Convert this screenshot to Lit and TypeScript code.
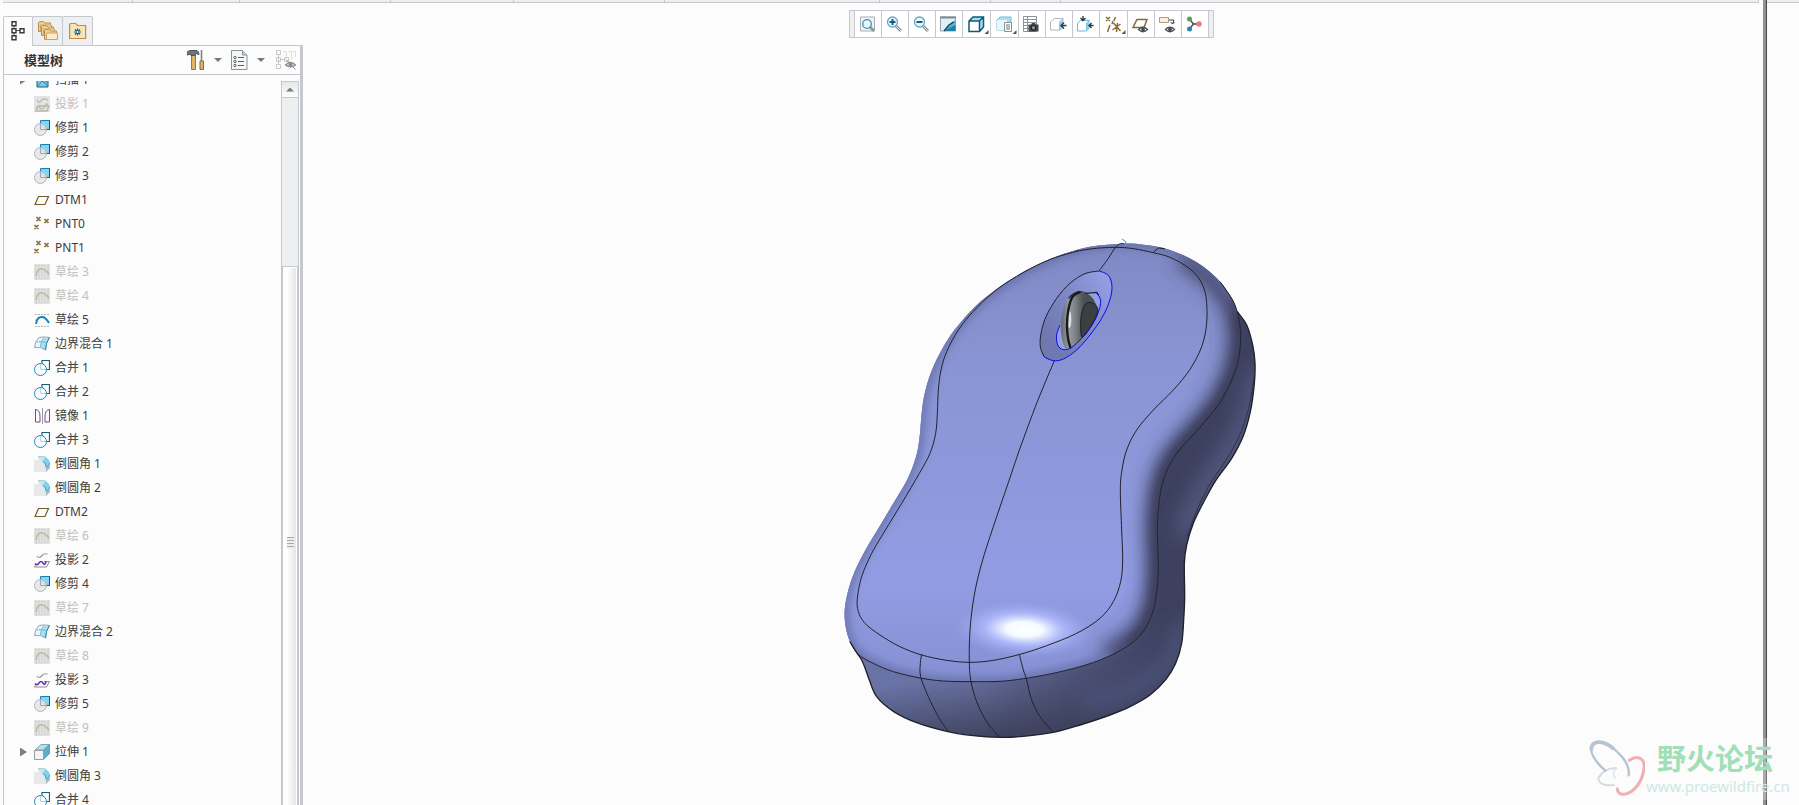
import { LitElement, html, svg, css } from "lit";
import { customElement, state } from "lit/decorators.js";

type Pt = [number, number];

/** Catmull-Rom spline through the points, as an SVG path. */
function curve(points: Pt[], closed = false): string {
  const n = points.length;
  const at = (i: number): Pt =>
    closed ? points[(i + n) % n] : points[Math.max(0, Math.min(n - 1, i))];
  let d = `M${points[0][0]} ${points[0][1]}`;
  const last = closed ? n : n - 1;
  for (let i = 0; i < last; i++) {
    const [a, b, c, e] = [at(i - 1), at(i), at(i + 1), at(i + 2)];
    const r = (v: number) => Math.round(v * 10) / 10;
    d += `C${r(b[0] + (c[0] - a[0]) / 6)} ${r(b[1] + (c[1] - a[1]) / 6)} ${r(c[0] - (e[0] - b[0]) / 6)} ${r(c[1] - (e[1] - b[1]) / 6)} ${c[0]} ${c[1]}`;
  }
  return closed ? d + "Z" : d;
}

const RIGHT_SIDE: Pt[] = [
  [1222, 245], [1250, 285], [1268, 345], [1275, 400], [1273, 460], [1262, 540], [1240, 617],
  [1205, 685], [1157, 752], [1120, 818], [1090, 880], [1070, 945], [1063, 1000], [1064, 1100],
  [1061, 1170], [1055, 1240], [1037, 1300], [1008, 1348], [960, 1395], [900, 1430], [840, 1455],
  [750, 1485], [670, 1507], [580, 1519], [510, 1522], [430, 1517], [350, 1504], [260, 1478],
  [190, 1444], [140, 1400], [118, 1350], [108, 1322], [95, 1290], [80, 1268], [60, 1235],
];
const LEFT_SIDE: Pt[] = [
  [47, 1190], [44, 1140], [55, 1080], [75, 1022], [108, 957], [148, 890], [190, 820], [230, 752],
  [250, 705], [263, 660], [270, 610], [275, 550], [283, 495], [302, 430], [332, 365], [375, 298],
  [435, 230], [500, 177], [560, 138], [620, 105], [700, 72], [780, 50], [880, 41],
];
const TOP_RIGHT: Pt[] = [
  [940, 44], [1000, 54], [1060, 76], [1120, 110], [1170, 155], [1205, 205],
];
const LOWER_EDGE: Pt[] = [
  [1222, 245], [1232, 310], [1226, 385], [1205, 450], [1168, 520], [1110, 592], [1050, 658],
  [1015, 712], [995, 770], [986, 830], [982, 900], [985, 1000], [982, 1070], [970, 1140],
  [943, 1200], [900, 1243], [830, 1282], [750, 1310], [660, 1332], [580, 1346], [510, 1354],
  [420, 1355], [340, 1353], [270, 1344], [190, 1325], [130, 1300], [85, 1273], [60, 1235],
];
const UPPER_EDGE: Pt[] = [
  [855, 52], [780, 57], [710, 72], [640, 97], [560, 139], [490, 187], [430, 244], [385, 300],
  [350, 365], [333, 420], [325, 480], [322, 550], [317, 610], [300, 670], [268, 730], [215, 820],
  [165, 902], [125, 970], [95, 1040], [82, 1105], [85, 1145], [105, 1180], [150, 1215],
  [210, 1250], [275, 1275], [350, 1291], [420, 1297], [490, 1291], [570, 1273], [650, 1247],
  [740, 1210], [810, 1165], [850, 1115], [872, 1055], [878, 990], [875, 900], [871, 780],
  [876, 720], [890, 660], [920, 600], [970, 540], [1030, 480], [1080, 418], [1115, 350],
  [1130, 280], [1128, 200], [1110, 150], [1075, 113], [1020, 82], [970, 68], [910, 56],
];
const RECESS: Pt[] = [
  [808, 123], [835, 136], [846, 170], [838, 215], [815, 265], [780, 315], [740, 360], [700, 387],
  [670, 392], [642, 380], [631, 350], [633, 310], [648, 260], [680, 205], [720, 160], [765, 131],
];
const OPENING: Pt[] = [
  [770, 190], [800, 188], [812, 212], [805, 247], [785, 287], [755, 325], [725, 352], [700, 359],
  [683, 345], [680, 315], [690, 285], [720, 230],
];
const WHEEL: Pt[] = [
  [747, 184], [718, 200], [699, 240], [692, 290], [698, 335], [710, 357], [730, 348], [757, 323],
  [785, 285], [803, 245], [790, 208], [768, 188],
];
const HUB: Pt[] = [
  [780, 217], [797, 226], [803, 245], [785, 285], [758, 321], [752, 290], [755, 250], [765, 225],
];

const OUTLINE = curve([...RIGHT_SIDE, ...LEFT_SIDE, ...TOP_RIGHT], true);
const SHELL = curve([...LOWER_EDGE, ...LEFT_SIDE, ...TOP_RIGHT], true);

const mouseModel = svg`
  <defs>
    <clipPath id="outline"><path d=${OUTLINE} /></clipPath>
    <clipPath id="shell"><path d=${SHELL} /></clipPath>
    <clipPath id="wheel"><path d=${curve(WHEEL, true)} /></clipPath>
    <filter id="soft" x="-30%" y="-30%" width="160%" height="160%"><feGaussianBlur stdDeviation="28" /></filter>
    <filter id="softer" x="-50%" y="-50%" width="200%" height="200%"><feGaussianBlur stdDeviation="14" /></filter>
    <linearGradient id="top" x1="0" y1="0" x2="0" y2="1">
      <stop offset="0" stop-color="#8089c4" /><stop offset=".3" stop-color="#8a95d5" />
      <stop offset=".78" stop-color="#919ce3" /><stop offset="1" stop-color="#8690d2" />
    </linearGradient>
    <linearGradient id="front" gradientUnits="userSpaceOnUse" x1="400" y1="1330" x2="430" y2="1525">
      <stop offset="0" stop-color="#6973a6" /><stop offset="1" stop-color="#40445f" />
    </linearGradient>
    <linearGradient id="flank" gradientUnits="userSpaceOnUse" x1="450" y1="0" x2="1000" y2="0">
      <stop offset="0" stop-color="#3d405e" stop-opacity="0" /><stop offset="1" stop-color="#3d405e" />
    </linearGradient>
    <linearGradient id="tread" gradientUnits="userSpaceOnUse" x1="692" y1="0" x2="765" y2="0">
      <stop offset="0" stop-color="#656b70" /><stop offset=".35" stop-color="#949ba1" />
      <stop offset=".6" stop-color="#7d8488" /><stop offset="1" stop-color="#43484b" />
    </linearGradient>
    <linearGradient id="dish" gradientUnits="userSpaceOnUse" x1="640" y1="300" x2="840" y2="170">
      <stop offset="0" stop-color="#6f78af" /><stop offset=".5" stop-color="#7e88c6" /><stop offset="1" stop-color="#929de4" />
    </linearGradient>
    <radialGradient id="shine">
      <stop offset="0" stop-color="#fff" /><stop offset=".26" stop-color="#f4fbff" />
      <stop offset=".55" stop-color="#b6c0ff" stop-opacity=".8" /><stop offset="1" stop-color="#99a4f0" stop-opacity="0" />
    </radialGradient>
  </defs>
  <path d=${OUTLINE} fill="url(#front)" />
  <g clip-path="url(#outline)">
    <rect x="450" y="200" width="900" height="1340" fill="url(#flank)" />
    <path d=${curve([[1290, 420], [1262, 540], [1200, 665], [1110, 800], [1060, 920]])} fill="none" stroke="#525981" stroke-width="60" filter="url(#soft)" />
    <path d=${curve([[1060, 1180], [1020, 1290], [920, 1370], [760, 1420]])} fill="none" stroke="#4c5279" stroke-width="56" filter="url(#soft)" />
  </g>
  <path d=${SHELL} fill="url(#top)" />
  <g clip-path="url(#shell)">
    <path d=${curve([[1060, 77], [1120, 110], [1170, 155], [1205, 205], ...LOWER_EDGE.slice(0, 17)])} fill="none" stroke="#3a3e5b" stroke-width="72" filter="url(#soft)" />
    <path d=${curve(LOWER_EDGE.slice(0, 16))} fill="none" stroke="#3a3e5b" stroke-width="34" filter="url(#softer)" />
    <path d=${curve([...LOWER_EDGE.slice(16), ...LEFT_SIDE, ...TOP_RIGHT])} fill="none" stroke="#626ca4" stroke-width="22" filter="url(#softer)" />
  </g>
  <ellipse cx="583" cy="1198" rx="210" ry="86" fill="url(#shine)" transform="rotate(3 583 1198)" />
  <path d=${curve(RECESS, true)} fill="url(#dish)" />
  <path d=${curve(OPENING, true)} fill="#949fe7" />
  <path d=${curve(WHEEL, true)} fill="url(#tread)" />
  <g clip-path="url(#wheel)">
    <path d="M745 180Q790 195 806 245" fill="none" stroke="#50565a" stroke-width="20" filter="url(#softer)" />
    <ellipse cx="718" cy="268" rx="6" ry="26" fill="#eef1f4" opacity=".8" />
  </g>
  <path d=${curve(HUB, true)} fill="#3c3f42" stroke="#1f2022" stroke-width="3" />
  <path d=${curve([[752, 185], [728, 200], [715, 240], [711, 290], [715, 330], [722, 355]])} fill="none" stroke="#17181a" stroke-width="7" />
  <g fill="none" stroke="#20222b" stroke-width="3">
    <path d=${curve(RIGHT_SIDE)} stroke-width="4" />
    <path d=${curve([[1273, 440], [1256, 535], [1226, 622], [1185, 695], [1135, 770], [1095, 855], [1072, 920]])} stroke-width="2" />
    <path d=${curve(LOWER_EDGE)} />
    <path d=${curve([[1170, 155], [1205, 205], [1222, 245]])} />
    <path d=${curve(UPPER_EDGE, true)} />
    <path d="M738 66L743 60M970 67L985 54L1004 56" />
    <path d=${curve([[882, 41], [868, 42], [855, 54], [835, 85], [808, 122]])} />
    <path d=${curve([[673, 392], [622, 515], [570, 655], [536, 755], [490, 890], [455, 1000], [432, 1100], [420, 1200], [418, 1297], [423, 1354], [440, 1415], [470, 1475], [508, 1521]])} />
    <path d=${curve([[275, 1273], [271, 1300], [272, 1340], [295, 1400], [325, 1460], [355, 1505]])} />
    <path d=${curve([[568, 1273], [580, 1320], [590, 1350], [605, 1410], [630, 1460], [670, 1507]])} />
    <path d=${curve([...RECESS.slice(9), RECESS[0]])} />
    <path d="M766 190L800 187L806 196M747 184Q728 190 716 205" stroke-width="4" />
  </g>
  <g fill="none" stroke="#0a0ae6" stroke-width="3">
    <path d=${curve(RECESS.slice(0, 10))} />
    <path d=${curve(OPENING.slice(1, 11))} />
  </g>
  <path d="M876 27L886 34L888 42" fill="none" stroke="#21a3bd" stroke-width="3" />
`;

const grayDots = svg`<path d="M1.500 2h13M1.500 5h13M1.500 8h13M1.500 11h13M1.500 14h13" stroke="#b2b2ae" stroke-dasharray="1 2" fill="none" />`;

const treeIcons: Record<string, unknown> = {
  sweep: svg`<path d="M3 5h11v10H3z" fill="#7dcbea" stroke="#17617e" /><path d="M3 15l5-6 3 2 3 4M3 8l4-2 7 5" stroke="#2a87aa" fill="none" />`,
  projectOff: svg`<rect width="16" height="16" fill="#e3e3e3" /><path d="M3 4q2 4 4 1t4-2 3 1M2 15l2-5h11l-2 5zM2 13q2-4 4-1t5-2 2 1" fill="none" stroke="#b9b9a8" stroke-width="1.300" />`,
  project: svg`<path d="M3 4q2 3 4.500 0t6-2" fill="none" stroke="#9a9a9a" stroke-width="1.200" /><path d="M10 9.500h5.500l-3 5.500H.5l1-2" fill="none" stroke="#8c8c8c" /><path d="M1 11.500q2 2.500 4-.5t4 0 3-1.500" fill="none" stroke="#6d2fb0" stroke-width="1.600" />`,
  trim: svg`<path d="M6.500.5h9v9h-3L6.500 5z" fill="#85d4f7" stroke="#1584ab" /><path d="M15.500.5v9h-4" fill="none" stroke="#125b78" /><circle cx="6.500" cy="9.500" r="6" fill="#e4e4e4" fill-opacity=".85" stroke="#b2b4b6" /><path d="M6.500 3.500v6h6" fill="none" stroke="#9aabb3" />`,
  plane: svg`<path d="M4.500 4.500h10l-3.500 8H1z" fill="none" stroke="#735c2c" stroke-width="1.200" />`,
  point: svg`<path d="M2.500 1l4 4m0-4l-4 4M10.500 3l4 4m0-4l-4 4M.5 9l4 4m0-4l-4 4" stroke="#876b35" stroke-width="1.600" />`,
  sketchOff: svg`<rect width="16" height="16" fill="#e1e1e1" />${grayDots}<path d="M2 12q1-8 7-7 3 1 6 5" fill="none" stroke="#bdbca5" stroke-width="1.700" />`,
  sketch: svg`<path d="M1.500 2.500h13M1.500 14.500h13M1.500 8h3M12 8h3" stroke="#68717a" stroke-dasharray="1 2" /><path d="M2 12q1-8 7-7 3 1 6 6" fill="none" stroke="#1785b5" stroke-width="2" />`,
  blend: svg`<path d="M5 1.500Q10 .3 15.500 1.500 11 7 11.500 14 7 10.500.5 11.500 1 5 5 1.500z" fill="#e6f6fd" stroke="#9aa5aa" /><path d="M10.500 2Q6.500 6 6.500 11l4.500 2.500q0-6.500 4-11.500z" fill="#8fd6f3" opacity=".75" /><path d="M2.500 6Q8 4.500 13 7M10 1.500Q6 6 6.500 11" stroke="#7fb9ce" fill="none" /><path d="M15.500 1.500Q11.500 7 11.500 14" stroke="#2583a5" fill="none" />`,
  merge: svg`<path d="M8 4V.5h7.500v9H12" fill="none" stroke="#145f7c" stroke-width="1.200" /><circle cx="6.500" cy="9.500" r="6" fill="#fcfeff" stroke="#2488ab" /><path d="M6.500 4v5.500H12" stroke="#b4d2de" fill="none" />`,
  mirror: svg`<path d="M8.500 0v16" stroke="#999" /><path d="M1 1.500q5 0 5 7v5.500H1.500V1.500M16 1.500q-5 0-5 7v5.500h4.500V1.500" fill="none" stroke="#7d459b" />`,
  round: svg`<path d="M0 4h5q6 1 7 8v4H0z" fill="#e8e8e8" /><path d="M4 1q5-2 9 1 3 3 3 5l-4 5Q11 5 5 4z" fill="#b8e8fa" /><path d="M9 5.500q3 2 3.500 6.500L16 7.500Q15 3 12 1.500z" fill="#7fd0f0" /><path d="M4 .5q5-1 8 1l-3 4" fill="none" stroke="#b5c3c9" /><path d="M9 5.500q3 2 3.500 6.500L16 7" fill="none" stroke="#3e9bbd" /><path d="M12 12l4-4v4l-4 4z" fill="#a9b9c0" />`,
  extrude: svg`<path d="M1 6l6-5.500h8.500l-6 5.500z" fill="#b8dfee" stroke="#75a6ba" /><path d="M9.500 6l6-5.500v9l-6 6z" fill="#60aecb" stroke="#5b9fb9" /><path d="M.5 6.500h9v9h-9z" fill="#f4f4f4" stroke="#9b9b9b" />`,
};

type Row = { icon: string; name: string; off?: boolean; folded?: boolean };
const ROWS: Row[] = [
  { icon: "sweep", name: "扫描 1", folded: true },
  { icon: "projectOff", name: "投影 1", off: true },
  { icon: "trim", name: "修剪 1" },
  { icon: "trim", name: "修剪 2" },
  { icon: "trim", name: "修剪 3" },
  { icon: "plane", name: "DTM1" },
  { icon: "point", name: "PNT0" },
  { icon: "point", name: "PNT1" },
  { icon: "sketchOff", name: "草绘 3", off: true },
  { icon: "sketchOff", name: "草绘 4", off: true },
  { icon: "sketch", name: "草绘 5" },
  { icon: "blend", name: "边界混合 1" },
  { icon: "merge", name: "合并 1" },
  { icon: "merge", name: "合并 2" },
  { icon: "mirror", name: "镜像 1" },
  { icon: "merge", name: "合并 3" },
  { icon: "round", name: "倒圆角 1" },
  { icon: "round", name: "倒圆角 2" },
  { icon: "plane", name: "DTM2" },
  { icon: "sketchOff", name: "草绘 6", off: true },
  { icon: "project", name: "投影 2" },
  { icon: "trim", name: "修剪 4" },
  { icon: "sketchOff", name: "草绘 7", off: true },
  { icon: "blend", name: "边界混合 2" },
  { icon: "sketchOff", name: "草绘 8", off: true },
  { icon: "project", name: "投影 3" },
  { icon: "trim", name: "修剪 5" },
  { icon: "sketchOff", name: "草绘 9", off: true },
  { icon: "extrude", name: "拉伸 1", folded: true },
  { icon: "round", name: "倒圆角 3" },
  { icon: "merge", name: "合并 4" },
];

const eye = svg`<path d="M6.500 13.500Q11 9 15.500 13.500 11 18 6.500 13.500z" fill="#fff" stroke="#4a4f54" stroke-width="1.300" /><circle cx="11" cy="13.500" r="2" fill="#4a4f54" />`;
const lens = (sign: unknown) => svg`<path d="M10 10l5 5" stroke="#8f9499" stroke-width="3" /><path d="M10 10l5 5" stroke="#dde0e2" /><circle cx="6.500" cy="6" r="5" fill="#edf8fd" stroke="#64a7c2" stroke-width="1.300" />${sign}`;

const TOOLS: { label: string; menu?: boolean; art: unknown }[] = [
  { label: "重新调整", art: svg`<path d="M1.500 15V1h14v14z" fill="#f2f3f4" stroke="#a9adb0" /><path d="M11 11l4 4" stroke="#8f9499" stroke-width="2.500" /><circle cx="8" cy="8" r="4.300" fill="#eaf7fc" stroke="#3f8fb0" stroke-width="1.300" />` },
  { label: "放大", art: lens(svg`<path d="M3.500 6h6M6.500 3v6" stroke="#125f83" stroke-width="2" />`) },
  { label: "缩小", art: lens(svg`<path d="M3.500 6h6" stroke="#125f83" stroke-width="2" />`) },
  { label: "重画", art: svg`<path d="M.5 1h15v14H.5z" fill="#dff1f8" stroke="#98a4aa" /><path d="M15.500 4v11H4q4-8 11.500-11z" fill="#5fb0cf" /><path d="M15.500 9v6H4z" fill="#1f7ea5" /><path d="M4 15l5-6 5-3" stroke="#0e4b66" stroke-width="1.400" fill="none" /><path d="M0 1.500h16" stroke="#7c8a91" stroke-width="2" />` },
  { label: "显示样式", menu: true, art: svg`<path d="M1 5l4-4h10.500v10l-4 4.500H1z" fill="#a7ddf3" /><path d="M1 5h10.500v10.500H1z" fill="#fff" /><path d="M1 5l4-4h10.500v10l-4 4.500H1zM1 5h10.500v10.500M11.500 5l4-4" fill="none" stroke="#0f5a7c" stroke-width="1.500" />` },
  { label: "已保存方向", menu: true, art: svg`<path d="M1 4l3-3h11v9l-4 4H1z" fill="#a9e0f5" stroke="#7bb9d1" /><path d="M1 4h10v10H1z" fill="#e9f6fb" /><path d="M8.500 6.500h7v9h-7z" fill="#fff" stroke="#8d9093" /><path d="M10 9h4M10 11h4M10 13h4" stroke="#6f7376" />` },
  { label: "视图管理器", art: svg`<path d="M.5.500h13v15H.5zM.5 3.500h13M.5 6.500h13M.5 9.500h13M.5 12.500h13M4.500 .5v15" fill="#fff" stroke="#8f9498" /><path d="M5.500 8.500h2.500l1-1.500h3l1 1.500h2.500v7H5.500z" fill="#43474b" /><circle cx="10.500" cy="11.800" r="2.300" fill="#8b9094" stroke="#111" />` },
  { label: "剖面", art: svg`<path d="M.5 6l4-3.500H13L9.500 6v8h-9z" fill="#fff" stroke="#b1b4b6" /><path d="M9.500 6l4-4v10l-4 3z" fill="#93d4ef" /><path d="M16.500 9.500h-5M14 6.500l-3 3 3 3" stroke="#393c40" stroke-width="1.500" fill="none" />` },
  { label: "外观", art: svg`<path d="M.5 7l3-2.500h9L9.500 7v8h-9z" fill="#fff" stroke="#72b8d3" /><path d="M9.500 7l3-3v9l-3 2z" fill="#86cfed" /><path d="M6 0v4M3.500 2L6 4.500 8.500 2M16.500 9.500h-4M14.500 7L12 9.500l2.500 2.500" stroke="#303438" stroke-width="1.300" fill="none" />` },
  { label: "基准显示过滤器", menu: true, art: svg`<path d="M1 1l4 4m0-4L1 5M10.500 1L9 5M5 9l-2.500 7M8 5L7 8M8.500 7l7 8M15.500 8l-8 6M12.500 7l-1 9" stroke="#8a6c32" stroke-width="1.500" fill="none" />` },
  { label: "平面显示", art: svg`<path d="M5 3.500h10l-3 8H1z" fill="#fff" stroke="#846a39" stroke-width="1.500" />${eye}` },
  { label: "注释显示", art: svg`<path d="M.5 1.500h9v5h-9z" fill="#fdf1dc" stroke="#a89b82" /><path d="M10 4h5l-1.500 4M11.500 6l2 2 2-2" stroke="#3c4044" fill="none" />${eye}` },
  { label: "旋转中心", art: svg`<path d="M3.500 3l4 5-4 5M7.500 8h5" stroke="#3b3e42" stroke-width="1.300" fill="none" /><circle cx="3.500" cy="3" r="2.500" fill="#5a9d5a" /><circle cx="3.500" cy="13" r="2.500" fill="#3381ad" /><circle cx="13" cy="8" r="2.700" fill="#e87b79" />` },
];

const folder = svg`<path d="M.5 3v-1.500l1-1h4l1.500 1.500h5.500v8.500H.5z" fill="#efcf90" stroke="#b98e50" /><path d="M2.500 4h11v6.500h-11z" fill="#fdeccb" stroke="#c9a468" />`;
const TABS = [
  { label: "模型树", art: svg`<path d="M5 4v10M5 9.500h6" stroke="#5b5b5b" fill="none" /><g fill="#fff" stroke="#373737" stroke-width="1.400"><path d="M3 .7h4v4H3zM3 7.700h4v4H3zM3 14.700h4v4H3zM11 7.700h4v4h-4z" /></g>` },
  { label: "文件夹浏览器", art: svg`<g transform="translate(-1 0)">${folder}</g><g transform="translate(2 4)">${folder}</g><g transform="translate(5 8)">${folder}</g>` },
  { label: "收藏夹", art: svg`<path d="M.6 17.500V3.500l1-1h5l2 2h8v13z" fill="#fbe4b6" stroke="#b98e50" stroke-width="1.200" /><path d="M8.500 7.500v7M5 11h7M6 8.500l5 5M11 8.500l-5 5" stroke="#155f83" stroke-width="1.200" /><circle cx="8.500" cy="11" r="1" fill="#fff" />` },
];

@customElement("app-root")
export class AppRoot extends LitElement {
  @state() private tab = 0;

  static styles = css`
    :host {
      display: flex;
      height: 100vh;
      overflow: hidden;
      position: relative;
      background: #fcfcfc;
      color: #3c3c3c;
      font: 12px/24px "Noto Sans", "Noto Sans CJK SC", sans-serif;
    }
    * { box-sizing: border-box; }
    svg { display: block; flex: none; }
    button {
      margin: 0;
      padding: 0;
      border: 0;
      background: none;
      font: inherit;
      color: inherit;
    }
    .main { flex: 1; min-width: 0; display: flex; flex-direction: column; padding: 0 4px 0 3px; }
    .ribbon {
      flex: none;
      height: 3px;
      display: grid;
      grid-template-columns: 130px 107px 151px 123px 151px 215px 111px 70px 1fr;
      background: #eeeff1;
      border-bottom: 1px solid #c5c8cc;
    }
    .ribbon span { border-right: 1px solid #c5c8cc; }
    .divider { width: 4px; background: #919191; border-right: 1px solid #484848; }
    .side { width: 32px; }
    .side .ribbon { display: block; }
    .body { flex: 1; min-height: 0; display: flex; }

    .panel { width: 300px; flex: none; display: flex; flex-direction: column; padding-top: 13px; }
    .tabs { display: flex; height: 30px; margin-bottom: -1px; position: relative; }
    .tab {
      width: 31px;
      margin-right: -1px;
      display: grid;
      place-items: center;
      background: #eeeff1;
      border: 1px solid #c5c8cc;
      border-radius: 2px 2px 0 0;
    }
    .tab:first-child { width: 30px; }
    .tab.on { background: #fcfcfc; border-bottom-color: #fcfcfc; }
    .box {
      flex: 1;
      min-height: 0;
      display: flex;
      flex-direction: column;
      border: solid #c5c8cc;
      border-width: 1px 3px 0 1px;
    }
    .head {
      flex: none;
      height: 29px;
      display: flex;
      align-items: center;
      padding: 0 4px 0 20px;
      border-bottom: 1px solid #c5c8cc;
    }
    .title { flex: 1; margin: 0; font-size: 13px; font-weight: 700; line-height: 28px; color: #333; }
    .caret { width: 8px; height: 4px; margin: 0 9px; background: #77797b; clip-path: polygon(0 0, 100% 0, 50% 100%); }
    .filter { margin-left: 2px; }
    .content { flex: 1; min-height: 0; display: flex; padding: 6px 1px 0 0; }
    .tree { flex: 1; overflow: hidden; }
    .rows { list-style: none; margin: -13px 0 0; padding: 0; }
    .row { height: 24px; display: flex; align-items: center; padding-left: 16px; white-space: pre; }
    .fold { width: 7px; height: 9px; margin-right: 7px; }
    .fold.shown { background: #7d7d7d; clip-path: polygon(0 0, 100% 50%, 0 100%); }
    .name { margin-left: 5px; }
    .row.off { color: #bfbfbf; }

    .scroll { width: 18px; display: flex; flex-direction: column; border: 1px solid #c5c8cc; border-bottom: 0; background: #eeeff1; }
    .up { height: 16px; display: grid; place-items: center; background: linear-gradient(#e6e7e8, #fdfdfd); border-bottom: 1px solid #c5c8cc; }
    .up::before { content: ""; width: 8px; height: 4px; background: #77797b; clip-path: polygon(50% 0, 100% 100%, 0 100%); }
    .thumb {
      flex: 1;
      margin-top: 168px;
      display: flex;
      justify-content: center;
      padding-top: 270px;
      border: 1px solid #c5c8cc;
      border-width: 1px 1px 0;
      background: linear-gradient(90deg, #fff 30%, #e3e3e3);
      box-shadow: inset 1px 1px #fff, inset -1px 0 #fff;
    }
    .thumb i { width: 7px; height: 12px; background: repeating-linear-gradient(#aaa 0 1px, #eee 1px 3px); }

    .view { flex: 1; min-width: 0; position: relative; display: flex; flex-direction: column; align-items: center; padding-top: 7px; }
    .toolbar { display: flex; height: 28px; padding: 0 4px; background: #eeeff1; border: 1px solid #c5c8cc; }
    .tool { width: 27px; display: grid; place-items: center; position: relative; background: #fff; border-left: 1px solid #c5c8cc; }
    .tool:last-child { width: 28px; border-right: 1px solid #c5c8cc; }
    .tool.menu { width: 28px; }
    .tool.menu::after { content: ""; position: absolute; right: 1px; bottom: 3px; width: 4px; height: 4px; background: #555; clip-path: polygon(100% 0, 100% 100%, 0 100%); }
    .model { position: absolute; left: calc(50% - 201px); top: 227px; }

    .mark { position: absolute; right: 4px; bottom: 5px; display: flex; width: 207px; height: 62px; background: rgba(252, 252, 252, 0.25); }
    .words { margin-left: 1px; }
    .forum { margin: 0 0 0 11px; font: 700 29px/38px "Noto Sans CJK SC", sans-serif; color: #a2dfb9; }
    .site { display: block; font-size: 15px; line-height: 20px; color: #cde8e6; text-decoration: none; }
  `;

  render() {
    return html`
      <div class="main">
        <div class="ribbon">${Array.from({ length: 9 }, () => html`<span></span>`)}</div>
        <div class="body">
          <aside class="panel">
            <div class="tabs" role="tablist">
              ${TABS.map(
                (t, i) => html`<button class="tab ${this.tab === i ? "on" : ""}" role="tab" aria-label=${t.label}
                  aria-selected=${this.tab === i} @click=${() => (this.tab = i)}>
                  <svg width="20" height="20" viewBox="-1 0 20 20">${t.art}</svg>
                </button>`
              )}
            </div>
            <div class="box">
              <div class="head">
                <h2 class="title">模型树</h2>
                <button aria-label="设置"><svg width="18" height="20" viewBox="0 0 18 20">
                  <path d="M4.500 5h4v14.500h-4z" fill="#dcb56b" stroke="#9c7638" />
                  <path d="M0 2l3-1.500h7q2 1 2 4l-3-1-1 2H4V4L0 5z" fill="#6d7680" stroke="#4c525a" />
                  <path d="M14.500 0v11" stroke="#7d858c" stroke-width="1.600" /><path d="M13 11h3.500v8.500H13z" fill="#dcb56b" stroke="#8d6a31" />
                </svg></button>
                <span class="caret"></span>
                <button aria-label="显示"><svg width="17" height="20" viewBox="0 0 17 20">
                  <path d="M.5.500h11l4.500 4.500v14.500H.5z" fill="#f4f6f7" stroke="#8b9298" /><path d="M11.500.500V5H16" fill="#cdd2d6" stroke="#8b9298" />
                  <path d="M7 7.500h6M7 11.500h6M7 15.500h6" stroke="#5a5f64" />
                  <g fill="#fff" stroke="#5a5f64"><circle cx="4" cy="7.500" r="1.200" /><circle cx="4" cy="11.500" r="1.200" /><circle cx="4" cy="15.500" r="1.200" /></g>
                </svg></button>
                <span class="caret"></span>
                <button class="filter" aria-label="树过滤器" disabled><svg width="20" height="20" viewBox="0 0 20 20">
                  <g fill="none" stroke="#c9c9c9"><path d="M.5.500h4v4h-4zM.5 7.500h4v4h-4zM.5 14.500h4v4h-4zM8.500 7.500h4v4h-4zM2.500 5v9M5 9.500h3" /><path d="M7 1.500h3.500v5M12.500 1.500h3v8M17 1.500h2.500v6" stroke="#dedede" /></g>
                  <path d="M9.500 15q5-5 10 0-5 4-10 0z" fill="#ddd" stroke="#8a8a8a" stroke-width="1.200" /><circle cx="14.500" cy="15" r="2" fill="#8a8a8a" /><path d="M10 9.500l9.500 10" stroke="#8a8a8a" />
                </svg></button>
              </div>
              <div class="content">
                <div class="tree">
                  <ul class="rows">
                    ${ROWS.map(
                      (r) => html`<li class="row ${r.off ? "off" : ""}"><span class="fold ${r.folded ? "shown" : ""}"></span><svg width="16" height="16" viewBox="0 0 16 16">${treeIcons[r.icon]}</svg><span class="name">${r.name}</span></li>`
                    )}
                  </ul>
                </div>
                <div class="scroll"><button class="up" aria-label="向上滚动"></button><div class="thumb"><i></i></div></div>
              </div>
            </div>
          </aside>
          <main class="view">
            <div class="toolbar" role="toolbar">
              ${TOOLS.map(
                (t) => html`<button class="tool ${t.menu ? "menu" : ""}" aria-label=${t.label}><svg width="17" height="17" viewBox="0 0 17 17">${t.art}</svg></button>`
              )}
            </div>
            <svg class="model" width="440" height="520" viewBox="0 0 1320 1560">${mouseModel}</svg>
          </main>
        </div>
      </div>
      <div class="divider"></div>
      <div class="side"><div class="ribbon"></div></div>
      <div class="mark">
        <svg width="57" height="60" viewBox="0 0 171 180">
          <g fill="none" stroke-linecap="round">
            <path d="M85 91Q50 88 31 120Q33 146 78 141" stroke="#d5dade" stroke-width="6" />
            <path d="M84 91Q70 108 83 121" stroke="#dfe3e6" stroke-width="4" />
            <path d="M52 98C20 70 2 40 13 23C26 4 60 14 88 42C112 64 126 88 122 112" stroke="#b6c4d1" stroke-width="7" />
            <path d="M10 34C10 10 40 2 74 30" stroke="#b6c4d1" stroke-width="11" />
            <path d="M124 67C150 48 172 64 168 90C164 130 140 162 112 168C96 171 88 164 88 152" stroke="#eeb0b3" stroke-width="9" />
          </g>
        </svg>
        <div class="words">
          <p class="forum">野火论坛</p>
          <a class="site" href="http://www.proewildfire.cn">www.proewildfire.cn</a>
        </div>
      </div>
    `;
  }
}
